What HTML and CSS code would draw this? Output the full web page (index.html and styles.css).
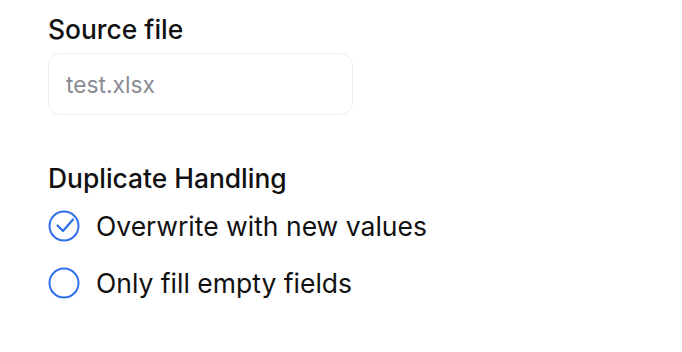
FILE: index.html
```html
<!DOCTYPE html>
<html lang="en">
<head>
    <meta charset="UTF-8">
    <meta name="viewport" content="width=device-width, initial-scale=1.0">
    <title>Import Settings</title>
    <link rel="stylesheet" href="styles.css">
</head>
<body>

    <div class="form">
        <div class="field">
            <label class="label" for="sourceFile">Source file</label>
            <input class="input" id="sourceFile" type="text" placeholder="test.xlsx">
        </div>

        <div class="field">
            <p class="label group-label">Duplicate Handling</p>
            <label class="option">
                <span class="radio checked">
                    <svg viewBox="0 0 32 32" width="32" height="32">
                        <circle cx="16" cy="16" r="14.5" fill="none" stroke="#2f6fea" stroke-width="2"/>
                        <path d="M9.5 15.5 L15 21 L25 9.5" fill="none" stroke="#2f6fea" stroke-width="2.2" stroke-linecap="round" stroke-linejoin="round"/>
                    </svg>
                </span>
                Overwrite with new values
            </label>
            <label class="option">
                <span class="radio">
                    <svg viewBox="0 0 32 32" width="32" height="32">
                        <circle cx="16" cy="16" r="14.5" fill="none" stroke="#2f6fea" stroke-width="2"/>
                    </svg>
                </span>
                Only fill empty fields
            </label>
        </div>
    </div>

</body>
</html>
```

FILE: styles.css
```css
* {
    margin: 0;
    padding: 0;
    box-sizing: border-box;
}

body {
    font-family: 'Inter', sans-serif;
    background: #fff;
    color: #111;
    padding: 12px 48px;
}

.form {
    display: flex;
    flex-direction: column;
    gap: 46px;
}

.field {
    display: flex;
    flex-direction: column;
}

.label {
    font-size: 26.4px;
    line-height: 34px;
    font-weight: 500;
    margin-bottom: 7px;
}

.group-label {
    margin-bottom: 2px;
}

.input {
    width: 305px;
    height: 62px;
    padding: 0 17px;
    font-family: 'Inter', sans-serif;
    font-size: 22.8px;
    border: 1.5px solid #eeeef1;
    border-radius: 12px;
    outline: none;
}

.input::placeholder {
    color: #8b8b94;
}

.option {
    display: flex;
    align-items: center;
    gap: 16px;
    font-size: 26.5px;
    line-height: 34px;
    height: 57px;
}

.radio {
    display: flex;
    width: 32px;
    height: 32px;
}
```
